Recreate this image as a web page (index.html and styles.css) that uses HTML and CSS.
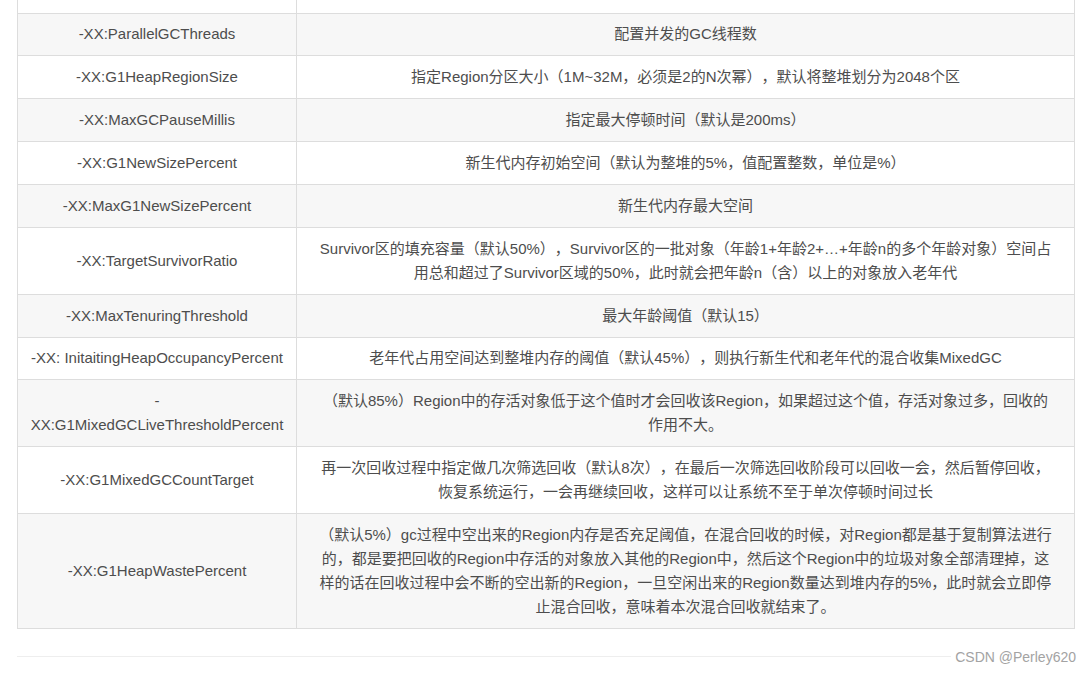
FILE: index.html
```html
<!DOCTYPE html>
<html lang="zh-CN">
<head>
<meta charset="utf-8">
<title>G1 参数</title>
<link rel="stylesheet" href="styles.css">
</head>
<body>
<div class="page">
  <table class="params">
    <colgroup><col class="c-name"><col class="c-desc"></colgroup>
    <tbody>
      <tr class="odd"><td>&nbsp;</td><td>&nbsp;</td></tr>
      <tr class="even short"><td>-XX:ParallelGCThreads</td><td>配置并发的GC线程数</td></tr>
      <tr class="odd"><td>-XX:G1HeapRegionSize</td><td>指定Region分区大小（1M~32M，必须是2的N次幂），默认将整堆划分为2048个区</td></tr>
      <tr class="even"><td>-XX:MaxGCPauseMillis</td><td>指定最大停顿时间（默认是200ms）</td></tr>
      <tr class="odd"><td>-XX:G1NewSizePercent</td><td>新生代内存初始空间（默认为整堆的5%，值配置整数，单位是%）</td></tr>
      <tr class="even"><td>-XX:MaxG1NewSizePercent</td><td>新生代内存最大空间</td></tr>
      <tr class="odd"><td>-XX:TargetSurvivorRatio</td><td>Survivor区的填充容量（默认50%），Survivor区的一批对象（年龄1+年龄2+…+年龄n的多个年龄对象）空间占<br>用总和超过了Survivor区域的50%，此时就会把年龄n（含）以上的对象放入老年代</td></tr>
      <tr class="even"><td>-XX:MaxTenuringThreshold</td><td>最大年龄阈值（默认15）</td></tr>
      <tr class="odd short"><td>-XX: InitaitingHeapOccupancyPercent</td><td>老年代占用空间达到整堆内存的阈值（默认45%），则执行新生代和老年代的混合收集MixedGC</td></tr>
      <tr class="even"><td>-<br>XX:G1MixedGCLiveThresholdPercent</td><td>（默认85%）Region中的存活对象低于这个值时才会回收该Region，如果超过这个值，存活对象过多，回收的<br>作用不大。</td></tr>
      <tr class="odd"><td>-XX:G1MixedGCCountTarget</td><td>再一次回收过程中指定做几次筛选回收（默认8次），在最后一次筛选回收阶段可以回收一会，然后暂停回收，<br>恢复系统运行，一会再继续回收，这样可以让系统不至于单次停顿时间过长</td></tr>
      <tr class="even"><td>-XX:G1HeapWastePercent</td><td>（默认5%）gc过程中空出来的Region内存是否充足阈值，在混合回收的时候，对Region都是基于复制算法进行<br>的，都是要把回收的Region中存活的对象放入其他的Region中，然后这个Region中的垃圾对象全部清理掉，这<br>样的话在回收过程中会不断的空出新的Region，一旦空闲出来的Region数量达到堆内存的5%，此时就会立即停<br>止混合回收，意味着本次混合回收就结束了。</td></tr>
    </tbody>
  </table>
  <div class="footer">
    <span class="watermark">CSDN @Perley620</span>
  </div>
</div>
</body>
</html>
```

FILE: styles.css
```css
html, body {
  margin: 0;
  padding: 0;
  background: #ffffff;
}

.page {
  padding: 0 16px 0 17px;
  overflow: hidden;
  height: 674px;
  font-family: "Liberation Sans", "Noto Sans CJK SC", sans-serif;
  color: #4d4d4d;
}

.params {
  border-collapse: collapse;
  table-layout: fixed;
  width: 1058px;
  margin-top: -30px;
  font-size: 15px;
  line-height: 24px;
  text-spacing-trim: space-all;
}

.c-name { width: 279px; }

.params td {
  border: 1px solid #dddddd;
  padding: 9px 8px;
  height: 24px;
  text-align: center;
  vertical-align: middle;
  word-break: break-all;
}

.params tr.short td { height: 23px; padding-top: 8px; }

.params tr.even td { background: #f7f7f7; }
.params tr.odd td { background: #ffffff; }

.footer {
  margin-top: 27px;
  border-top: 1px solid #eeeeee;
  display: flex;
  justify-content: flex-end;
  height: 20px;
}

.watermark {
  margin-top: -8px;
  margin-right: -1px;
  background: #ffffff;
  padding-left: 4px;
  font-size: 14px;
  line-height: 16px;
  color: #a3a3a3;
  font-family: "Liberation Sans", "Noto Sans CJK SC", sans-serif;
}
```
